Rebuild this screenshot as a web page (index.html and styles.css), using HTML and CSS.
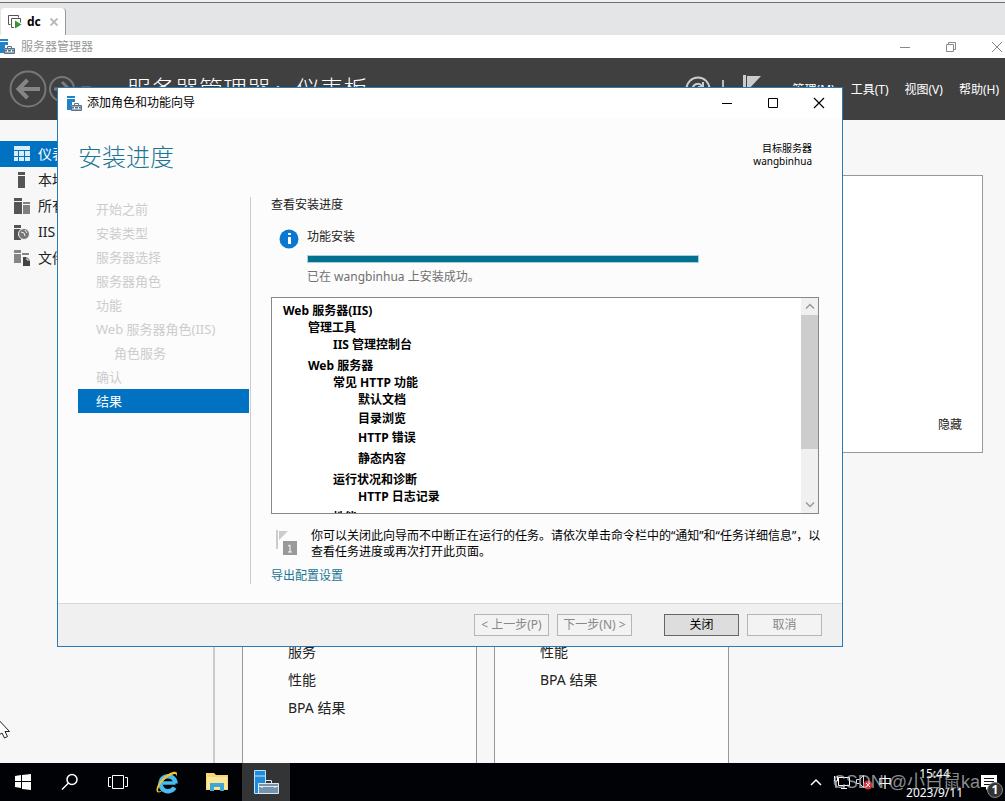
FILE: index.html
```html
<!DOCTYPE html>
<html lang="zh-CN">
<head>
<meta charset="utf-8">
<title>服务器管理器</title>
<link rel="stylesheet" href="styles.css">
</head>
<body>
<svg class="defs" aria-hidden="true">
  <symbol id="toolbox" viewBox="0 0 15 15">
    <path d="M0 0h8v2H0z M0 3h8v3H5v3H4v5H0z" fill="#1f83c6"/>
    <path d="M4.500 14.500v-5h10v5z" fill="#9db0c0" stroke="#5b7389"/>
    <path d="M7.500 9V7.500h4V9 M5 11.500h9" fill="none" stroke="#5b7389"/>
    <path d="M7 11h1v2H7z M11 11h1v2h-1z" fill="#fff"/>
  </symbol>
</svg>

<div class="screen">
  <nav class="vm-tabs">
    <div class="vm-tab">
      <svg width="16" height="16" viewBox="0 0 16 16"><path d="M3.500 10.500h-2v-9h10v2" fill="none" stroke="#555"/><path d="M7 13.500H4.500v-9h9v4" fill="none" stroke="#555"/><path d="M8 6.500v8l6.500-4z" fill="#2f9a2f"/></svg>
      <b>dc</b>
      <button class="bare" aria-label="关闭标签"><svg width="8" height="8" viewBox="0 0 8 8"><path d="M0.500 0.500l7 7M7.500 0.500l-7 7" stroke="#b5b5b5" stroke-width="1.800"/></svg></button>
    </div>
  </nav>

  <header class="app-title">
    <svg width="15" height="15"><use href="#toolbox"/></svg>
    <span>服务器管理器</span>
    <div class="app-controls">
      <button class="bare" aria-label="最小化"><svg width="12" height="12"><path d="M1 6.500h10" stroke="#888"/></svg></button>
      <button class="bare" aria-label="还原"><svg width="12" height="12"><path d="M1.500 3.500h7v7h-7zM3.500 3V1.500h7v7H9" fill="none" stroke="#888"/></svg></button>
      <button class="bare" aria-label="关闭"><svg width="12" height="12"><path d="M1 1l10 10M11 1L1 11" stroke="#888"/></svg></button>
    </div>
  </header>

  <div class="banner">
    <button class="bare" aria-label="后退"><svg width="38" height="38" viewBox="0 0 38 38"><circle cx="19" cy="19" r="17.500" fill="none" stroke="#777" stroke-width="2"/><path d="M31 19H10M18.500 10l-9 9 9 9" fill="none" stroke="#858585" stroke-width="4"/></svg></button>
    <button class="bare" aria-label="前进"><svg width="26" height="26" viewBox="0 0 26 26"><circle cx="13" cy="13" r="12" fill="none" stroke="#777" stroke-width="2"/><path d="M5 13h14M13 6l7 7-7 7" fill="none" stroke="#7c7c7c" stroke-width="3"/></svg></button>
    <svg class="caret" width="10" height="6"><path d="M0 0h10L5 5z" fill="#666"/></svg>
    <h1>服务器管理器 ▸ 仪表板</h1>
    <svg class="refresh" width="26" height="26" viewBox="0 0 26 26"><circle cx="13" cy="13" r="11.500" fill="none" stroke="#ccc" stroke-width="2"/><path d="M8 14a5 5 0 0 1 9-4M18 6v5h-5" fill="none" stroke="#ccc" stroke-width="2"/></svg>
    <svg class="bar" width="2" height="18"><path d="M0 0h2v18H0z" fill="#bbb"/></svg>
    <svg class="flag" width="18" height="28"><path d="M0 0h3v28H0z M4 1h14L4 16z" fill="#ccc"/></svg>
    <nav class="menu"><a href="#">管理(M)</a><a href="#">工具(T)</a><a href="#">视图(V)</a><a href="#">帮助(H)</a></nav>
  </div>

  <div class="workspace">
    <nav class="side">
      <a href="#" class="on"><svg width="16" height="16"><path d="M0 0h16v4H0z M0 5h4v5H0z M5 5h5v5H5z M11 5h5v5h-5z M0 11h4v4H0z M5 11h5v4H5z M11 11h5v4h-5z" fill="#d9ecf8"/></svg>仪表板</a>
      <a href="#"><svg width="16" height="16"><path d="M4 0h7v3H4z M4 4h7v12H4z" fill="#555"/></svg>本地服务器</a>
      <a href="#"><svg width="16" height="16"><path d="M0 0h8v3H0z M0 4h8v12H0z" fill="#555"/><path d="M9 4h7v2H9z M9 7h7v9H9z" fill="#808080"/></svg>所有服务器</a>
      <a href="#"><svg width="16" height="16"><path d="M0 1h7v3H0z M0 5h7v11H0z" fill="#555"/><circle cx="10" cy="10" r="5.500" fill="#777" stroke="#f7f7f7"/><path d="M7 8l3 1 1 3M11 6l2 3" stroke="#eee" fill="none"/></svg>IIS</a>
      <a href="#"><svg width="16" height="16"><path d="M0 0h7v3H0z M0 4h7v9H0z M8 3h7v2H8z" fill="#858585"/><path d="M9 7h4l3 3v6H9z" fill="#444"/><path d="M13 7v3h3" fill="none" stroke="#eee"/></svg>文件和存储服务</a>
    </nav>
    <main class="dash">
      <section class="welcome"><button class="bare">隐藏</button></section>
      <div class="cards">
        <section class="card"><a href="#">服务</a><a href="#">性能</a><a href="#">BPA 结果</a></section>
        <section class="card"><a href="#">性能</a><a href="#">BPA 结果</a></section>
      </div>
    </main>
  </div>

  <footer class="taskbar">
    <button aria-label="开始"><svg width="16" height="16"><path d="M0 2l6-1v6H0z M7 1l9-1v7H7z M0 8h6v6l-6-1z M7 8h9v8l-9-1z" fill="#fff"/></svg></button>
    <button aria-label="搜索"><svg width="18" height="18"><circle cx="11" cy="6.500" r="5" fill="none" stroke="#fff" stroke-width="1.500"/><path d="M7.500 10L1 16.500" stroke="#fff" stroke-width="1.500"/></svg></button>
    <button aria-label="任务视图"><svg width="20" height="14"><path d="M4.500 .5h11v13h-11z M3 2.500H.5v9H3 M17 2.500h2.500v9H17" fill="none" stroke="#fff"/></svg></button>
    <button class="wide" aria-label="Internet Explorer"><svg width="24" height="24" viewBox="0 0 24 24"><path d="M7.500 13h13" stroke="#45bdf0" stroke-width="3.500"/><path d="M19.500 17.500a7.500 7.500 0 1 1 1-4" fill="none" stroke="#45bdf0" stroke-width="4.500"/><path d="M2 22C-1 17 9 4 18 2c4-1 5 1 3 5 1-3-1-4-4-2C9 8 3 16 3 21c1 1 3 0 5-1-2 2-4 3-6 2z" fill="#f4c430"/></svg></button>
    <button class="wide" aria-label="文件资源管理器"><svg width="22" height="20"><path d="M0 1h8l2 2h12v15H0z" fill="#f7d774"/><path d="M1 5h20v12H1z" fill="#fce69a"/><path d="M4 19v-8h14v8h-4v-4H8v4z" fill="#3ea6d8"/></svg></button>
    <button class="active" aria-label="服务器管理器"><svg width="26" height="26" viewBox="0 0 26 26"><path d="M1.500 1.500h11v23h-11z" fill="#1f8bdc" stroke="#bfe2fa"/><path d="M2 7h10" stroke="#bfe2fa"/><path d="M5.500 14.500h20v10h-20z" fill="#7693aa" stroke="#dce7ef"/><path d="M12.500 14v-2.500h6V14 M6 17.500h19" fill="none" stroke="#dce7ef"/><path d="M9 17v2M22 17v2" stroke="#fff"/></svg></button>
    <div class="tray">
      <svg class="more" width="12" height="8"><path d="M1 7l5-5 5 5" fill="none" stroke="#fff" stroke-width="1.500"/></svg>
      <svg width="16" height="14"><path d="M4.500 2.500h11v8h-11z M7 13.500h6M10 11v2M.5 1v5h3V1 M2 6v7" fill="none" stroke="#fff"/></svg>
      <svg class="volume" width="18" height="16"><path d="M.5 5.500h3l4-4v12l-4-4h-3z" fill="none" stroke="#ddd"/><circle cx="12" cy="11" r="4.500" fill="#d9303a"/><path d="M10 9l4 4M14 9l-4 4" stroke="#fff"/></svg>
      <span class="ime">中</span>
      <time>15:44<br>2023/9/11</time>
      <button class="bare notes" aria-label="1 条通知"><svg width="16" height="15"><path d="M0 0h16v12H9l-4 3v-3H0z" fill="#fff"/><path d="M3 3.500h10M3 6.500h10M3 9.500h7" stroke="#111"/></svg><span class="badge">1</span></button>
    </div>
    <span class="watermark">CSDN @小白鼠ka</span>
  </footer>

  <svg class="pointer" width="11" height="20"><path d="M-6 -5L9.500 11.500H5l2.500 5-3 1.500L2 13l-8 5z" fill="#fff" stroke="#222"/></svg>

  <div class="wizard" role="dialog" aria-labelledby="wiz-title">
    <div class="wiz-bar">
      <svg width="15" height="15"><use href="#toolbox"/></svg>
      <span id="wiz-title">添加角色和功能向导</span>
      <div class="wiz-controls">
        <button class="bare" aria-label="最小化"><svg width="12" height="12"><path d="M1 6.500h10" stroke="#000"/></svg></button>
        <button class="bare" aria-label="最大化"><svg width="12" height="12"><path d="M1.500 1.500h9v9h-9z" fill="none" stroke="#000"/></svg></button>
        <button class="bare" aria-label="关闭"><svg width="12" height="12"><path d="M1 1l10 10M11 1L1 11" stroke="#000" stroke-width="1.200"/></svg></button>
      </div>
    </div>
    <div class="wiz-head">
      <h2>安装进度</h2>
      <p class="target">目标服务器<br>wangbinhua</p>
    </div>
    <div class="wiz-body">
      <ol class="steps">
        <li>开始之前</li><li>安装类型</li><li>服务器选择</li><li>服务器角色</li><li>功能</li><li>Web 服务器角色(IIS)</li><li class="sub">角色服务</li><li>确认</li><li class="current">结果</li>
      </ol>
      <div class="detail">
        <p class="lead">查看安装进度</p>
        <div class="status">
          <svg width="20" height="20"><circle cx="10" cy="10" r="9.500" fill="#0a78d1"/><path d="M9 4h3v2H9z M9 8h3v7H9z" fill="#fff"/></svg>
          <div class="status-text">
            <label for="install">功能安装</label>
            <progress id="install" value="100" max="100"></progress>
            <p>已在 wangbinhua 上安装成功。</p>
          </div>
        </div>
        <div class="results">
          <ul class="tree">
            <li>Web 服务器(IIS)
              <ul>
                <li>管理工具<ul><li>IIS 管理控制台</li></ul></li>
                <li class="gap-4">Web 服务器
                  <ul>
                    <li>常见 HTTP 功能
                      <ul><li>默认文档</li><li class="gap-2">目录浏览</li><li class="gap-2">HTTP 错误</li><li class="gap-4">静态内容</li></ul>
                    </li>
                    <li class="gap-4">运行状况和诊断<ul><li>HTTP 日志记录</li></ul></li>
                    <li class="gap-4">性能</li>
                  </ul>
                </li>
              </ul>
            </li>
          </ul>
          <div class="scroll" aria-hidden="true">
            <svg width="17" height="17"><path d="M5 10.500l4-4 4 4" fill="none" stroke="#999" stroke-width="1.500"/></svg>
            <div class="track"><div class="thumb"></div></div>
            <svg width="17" height="17"><path d="M5 6.500l4 4 4-4" fill="none" stroke="#999" stroke-width="1.500"/></svg>
          </div>
        </div>
        <div class="hint">
          <svg width="24" height="26"><path d="M1 0h2v19H1z M4 1h9L4 10z" fill="#ccc"/><path d="M8 11h14v14H8z" fill="#999"/><path d="M13 16l2-1v7M13 22h4" fill="none" stroke="#fff"/></svg>
          <p>你可以关闭此向导而不中断正在运行的任务。请依次单击命令栏中的“通知”和“任务详细信息”，以查看任务进度或再次打开此页面。</p>
        </div>
        <a class="export" href="#">导出配置设置</a>
      </div>
    </div>
    <div class="wiz-foot">
      <button disabled>&lt; 上一步(P)</button>
      <button disabled>下一步(N) &gt;</button>
      <button class="primary">关闭</button>
      <button disabled>取消</button>
    </div>
  </div>
</div>
</body>
</html>
```
FILE: styles.css
```css
* { box-sizing: border-box; }
body, h1, h2, p, ul, ol { margin: 0; padding: 0; }
ul, ol { list-style: none; }
body {
  font: 12px/16px "Noto Sans", "Noto Sans CJK SC", sans-serif;
  color: #222;
}
a { color: inherit; text-decoration: none; }
svg { display: block; flex: none; }
button { font: inherit; color: inherit; }
.bare { display: block; border: 0; padding: 0; background: none; }
.defs { position: absolute; width: 0; height: 0; }

.screen {
  position: relative;
  display: flex;
  flex-direction: column;
  height: 100vh;
  overflow: hidden;
  background: #f7f7f7;
}

/* Virtual machine tab strip */
.vm-tabs {
  display: flex;
  align-items: flex-end;
  height: 35px;
  flex: none;
  padding-left: 1px;
  background: linear-gradient(#f0f0f0 2px, #6f6f6f 2px, #6f6f6f 3px, #e4e5e6 3px);
}
.vm-tab {
  display: flex;
  align-items: center;
  gap: 4px;
  height: 27px;
  padding: 0 7px 0 6px;
  background: #fff;
  border-right: 1px solid #999;
  border-radius: 4px 4px 0 0;
  color: #000;
}
.vm-tab b { margin-right: 5px; }

/* Server manager window */
.app-title {
  display: flex;
  align-items: center;
  gap: 6px;
  height: 23px;
  flex: none;
  background: #fff;
  color: #999;
}
.app-controls, .wiz-controls { display: flex; gap: 34px; margin-left: auto; }
.app-controls { padding-right: 2px; }
.banner {
  display: flex;
  align-items: center;
  height: 62px;
  flex: none;
  padding: 0 6px 0 9px;
  background: #404040;
  color: #fff;
}
.banner h1 { margin-left: 36px; font-size: 24px; line-height: 32px; font-weight: 300; }
.banner .bare + .bare { margin-left: 2px; }
.caret { margin-left: 6px; }
.refresh { margin-left: auto; }
.bar { margin-left: 11px; }
.flag { margin-left: 19px; }
.menu { display: flex; gap: 16px; margin-left: 32px; padding-top: 2px; }

.workspace { display: flex; flex: 1; min-height: 0; }
.side {
  width: 215px;
  flex: none;
  padding-top: 21px;
  border-right: 2px solid #ccc;
  font-size: 14px;
}
.side a { display: flex; align-items: center; gap: 8px; height: 26px; padding-left: 14px; }
.side .on { background: #0072c1; color: #fff; }
.dash { flex: 1; padding: 55px 22px 0 27px; overflow: hidden; }
.welcome {
  display: flex;
  align-items: flex-end;
  justify-content: flex-end;
  height: 278px;
  padding: 0 20px 19px;
  border: 1px solid #999;
  background: #fff;
}
.cards { display: flex; gap: 17px; margin-top: 100px; }
.card {
  width: 235px;
  height: 280px;
  padding: 84px 45px 0;
  border: 1px solid #999;
  background: #fcfcfc;
  font-size: 14px;
  line-height: 28px;
}
.card a { display: block; }

/* Taskbar */
.taskbar {
  position: relative;
  display: flex;
  height: 38px;
  flex: none;
  background: #000205;
  color: #fff;
}
.taskbar > button {
  display: flex;
  align-items: center;
  justify-content: center;
  width: 48px;
  border: 0;
  padding: 0;
  background: none;
}
.taskbar > .wide { width: 50px; }
.taskbar > button:first-child { width: 46px; }
.taskbar > .active { background: #333436; }
.tray { display: flex; align-items: center; margin-left: auto; padding-right: 8px; gap: 4px; }
.more { margin-right: 8px; }
.volume { margin-left: 2px; }
.ime { font-size: 14px; }
.tray time { margin-left: 10px; padding-top: 2px; font-size: 12px; line-height: 19px; text-align: center; }
.notes { position: relative; margin-left: 14px; }
.badge {
  position: absolute;
  left: 6px;
  top: 7px;
  width: 16px;
  border: 1px solid #888;
  border-radius: 8px;
  background: #333;
  line-height: 14px;
  font-weight: bold;
}
.watermark {
  position: absolute;
  right: 25px;
  top: 6px;
  font-family: "Liberation Sans", "Noto Sans CJK SC", sans-serif;
  font-size: 18px;
  line-height: 26px;
  color: rgba(200, 200, 200, .7);
}
.pointer { position: absolute; left: 0; top: 720px; }

/* Wizard window */
.wizard {
  position: absolute;
  left: 57px;
  right: 162px;
  top: 87px;
  border: 1px solid #2a7ab8;
  background: #fcfcfc;
}
.wiz-bar {
  display: flex;
  align-items: center;
  gap: 5px;
  height: 30px;
  padding: 0 17px 0 9px;
  background: #fff;
  color: #000;
}
.wiz-head { display: flex; justify-content: space-between; padding: 22px 30px 0 20px; }
.wiz-head h2 { font-size: 24px; line-height: 34px; font-weight: 300; color: #1b7694; }
.target { padding-top: 2px; font-size: 10px; line-height: 13px; text-align: right; color: #000; }
.wiz-body { display: flex; padding: 23px 20px 19px; }
.steps {
  width: 173px;
  flex: none;
  border-right: 1px solid #ccc;
  padding-right: 1px;
  font-size: 13px;
  line-height: 24px;
  color: #ccc;
}
.steps li { padding-left: 18px; }
.steps .sub { padding-left: 36px; }
.steps .current { background: #0072c1; color: #fff; }
.detail { flex: 1; min-width: 0; padding-left: 20px; }
.status { display: flex; gap: 8px; padding: 16px 0 12px 8px; }
.status-text { color: #707070; }
.status-text label { display: block; color: #222; }
progress {
  display: block;
  width: 392px;
  height: 8px;
  margin: 10px 0 6px;
  border: 1px solid #a9cfda;
  appearance: none;
}
progress::-webkit-progress-bar { background: #e6e6e6; }
progress::-webkit-progress-value { background: #00718f; }
.results {
  display: flex;
  height: 217px;
  margin-right: 3px;
  border: 1px solid #888;
  background: #fff;
}
.tree {
  flex: 1;
  overflow: hidden;
  padding: 4px 0 0 11px;
  font-weight: bold;
  line-height: 17px;
  color: #000;
}
.tree ul { padding-left: 25px; }
.gap-2 { margin-top: 2px; }
.gap-4 { margin-top: 4px; }
.scroll { display: flex; flex-direction: column; width: 17px; background: #f0f0f0; }
.track { flex: 1; }
.thumb { height: 74%; background: #cdcdcd; }
.hint { display: flex; gap: 12px; padding: 14px 0 8px 4px; color: #000; }
.hint svg { margin-top: 2px; }
.export { display: block; color: #1b7694; }
.wiz-foot {
  display: flex;
  justify-content: flex-end;
  gap: 8px;
  padding: 10px 20px;
  border-top: 1px solid #d9d9d9;
  background: #f0f0f0;
}
.wiz-foot button {
  width: 75px;
  height: 22px;
  padding: 0;
  border: 1px solid #b5b5b5;
  background: #f3f3f3;
  color: #888;
  white-space: nowrap;
}
.wiz-foot .primary { margin-left: 24px; border-color: #666; background: #ddd; color: #000; }
```
